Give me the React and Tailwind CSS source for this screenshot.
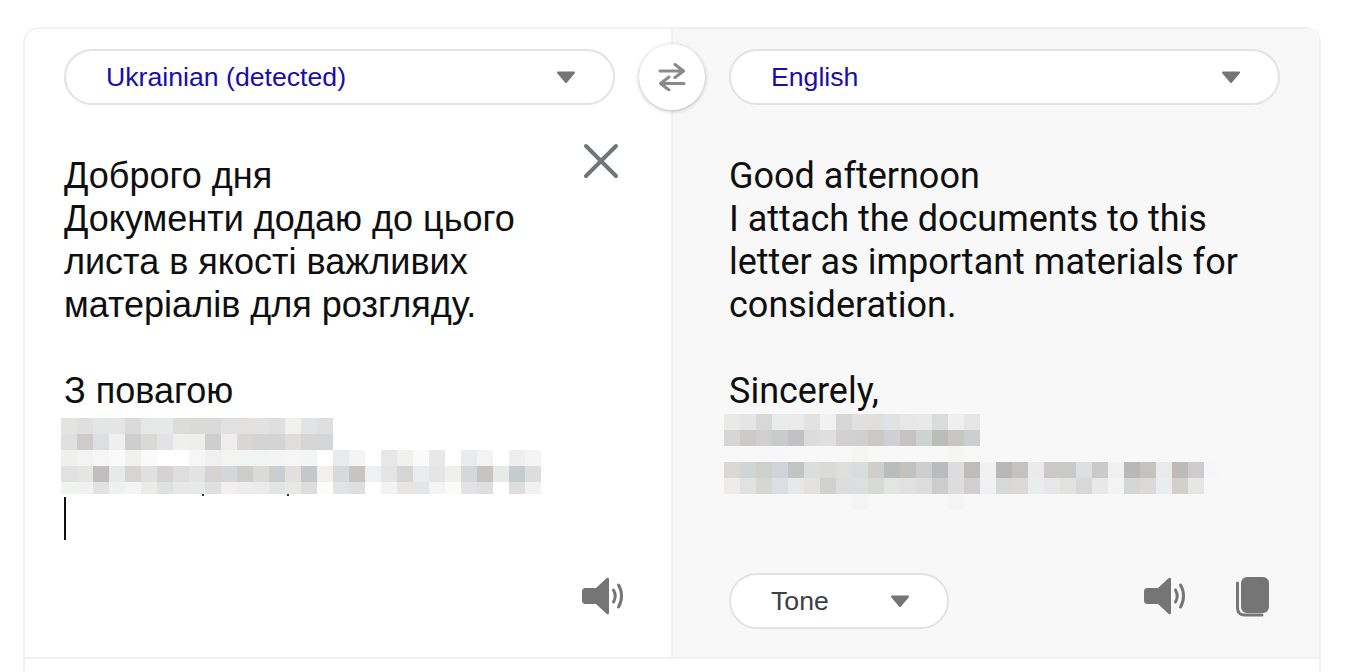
import React from 'react';

const leftRows = [
    ['e3e3e2', 'dfdfdf', 'e4e6e5', 'e4e5e4', 'dadada', 'e6e8e7', 'e7e8e8', 'dcdcda', 'dadad8', 'dadada', 'e1e1e1', 'e2e1e0', 'e2e2e2', 'dfdfdf', 'f0f0ee', 'e2e3e5', 'dfdfdf'],
    ['e0e0e0', 'cfcbcb', 'dcdee3', 'eeefee', 'cecece', 'd9d9d8', 'e3e3e5', 'efefee', 'eeeeec', 'cecece', 'efedee', 'd9d6d3', 'd4d4d4', 'd4d4d4', 'e0dddc', 'd6d6d7', 'd5d6d8'],
    ['efefee', 'f3f3f3', 'f7f6f7', 'fafafa', 'f1f1ef', 'fafafa', 'ffffff', 'ffffff', 'f6f6f6', 'f0f0f0', 'f3f4f2', 'f2f3f3', 'f2f4f3', 'f5f4f5', 'f6f6f6', 'f3f4f4', 'ffffff', 'e9eaec', 'f5f4f4', 'ffffff', 'e7e7e7', 'f1f1ef', 'fafafa', 'e8e8e8', 'ffffff', 'eaebed', 'f4f3f4', 'ffffff', 'eeeeee', 'f4f4f4'],
    ['e1e1e1', 'e5e5e3', 'c0bebf', 'e8eae9', 'd6d5d3', 'e0e0e0', 'd4d2d3', 'dedede', 'e3e3e3', 'd6d3d0', 'd4d6d9', 'cdcdcb', 'dcdad8', 'c9ced1', 'e2dfdc', 'c6c7cb', 'f1f0ed', 'd8d9db', 'c6c5c3', 'eef0f2', 'e5e5e5', 'd5d5d1', 'ebecf0', 'e5e5e5', 'efefec', 'd6d7d9', 'c6c5c3', 'e9eae8', 'c5cbce', 'dddddd'],
    ['f1f3f1', 'f1f1f1', 'e2e2e2', 'eff1f1', 'f4f4f4', 'ebebe9', 'dfe2e0', 'e8e8e8', 'e8eaea', 'e0e0e0', 'f1eff0', 'ededed', 'ebebeb', 'e2e5e4', 'e8e8e6', 'dddddd', 'fdfdfb', 'e2e3e5', 'dfdfdf', 'ffffff', 'f3f3f3', 'e7e6e4', 'e4e5e7', 'f4f4f4', 'fbfbf9', 'e3e3e6', 'dfdfdf', 'ffffff', 'dddddd', 'f1f1f1'],
];

const rightRows = [
    ['e9e9e7', 'e5e5e5', 'd9d8d8', 'e9ecea', 'e9eae9', 'e2e2e2', 'f1f1f1', 'd8d7d7', 'e0e0e0', 'e0dfdd', 'e1e2e5', 'e7e7e7', 'e9e9e9', 'd9dcda', 'efefef', 'e6e6e6'],
    ['d6d6d6', 'cdcac9', 'd1cfd0', 'c9ccca', 'c2c2c4', 'dcdcdc', 'dfdfdf', 'd2d0d1', 'd1d0d0', 'ccc8c5', 'cfd0d6', 'c6c3c0', 'cdd2d3', 'bdbdb7', 'c8c6c3', 'cdced0'],
    ['f8f8f8', 'f8f8f8', 'f7f7f7', 'f7f7f9', 'f8f8f8', 'f8f8f8', 'f8f8f8', 'f8f8f8', 'f5f5f2', 'f8f8f8', 'f8f8f8', 'f8f8f8', 'f8f8f8', 'f8f8f8', 'f5f5f2', 'f8f8f8'],
    ['dcd8d5', 'd0d5d5', 'cfd0ca', 'd2d4d9', 'c1c4c2', 'dbdedc', 'dadbd7', 'dedede', 'd9dcdc', 'cfcec8', 'babcbe', 'c5c2be', 'cdced0', 'b9bbbe', 'dddddd', 'bfbcbc', 'eff1f0', 'b8b8b8', 'c5c3c0', 'ebebeb', 'cac9c6', 'c9c9c9', 'dedfe1', 'cacaca', 'f0f0f0', 'b8b8b8', 'c5c2c0', 'e9eaec', 'bfbaba', 'cdcdd0', 'f7f7f9'],
    ['efebea', 'dfe2e1', 'd6d6d2', 'dddee3', 'e6e9e7', 'e3e2df', 'd1d1d1', 'dddddd', 'dcdfdf', 'd9d9d5', 'e3e5e3', 'e1e1e1', 'dddddd', 'cdcdcd', 'dddddd', 'd0cece', 'f1f1f3', 'd6d9d8', 'dbdad7', 'ebecee', 'e7e7e9', 'e2e3e0', 'd8d8d9', 'e8e8e8', 'f3f3f3', 'd4d7d6', 'dcdad8', 'ebecee', 'd2d0cd', 'e6e6e7'],
    ['f8f8f8', 'f8f8f8', 'f8f8f8', 'f8f8f8', 'f8f8f8', 'f8f8f8', 'f8f8f8', 'f8f8f8', 'f5f5f5', 'f8f8f8', 'f8f8f8', 'f8f8f8', 'f8f8f8', 'f8f8f8', 'f5f5f5', 'f8f8f8'],
];

const Caret = () => (
    <svg width="20" height="14" viewBox="0 0 20 14" className="shrink-0">
        <path d="M2 2.500h16L10 12z" fill="#757575" stroke="#757575" strokeWidth="2" strokeLinejoin="round" />
    </svg>
);

const Speaker = () => (
    <svg width="41" height="38" viewBox="0 0 41 38">
        <path d="M3 11h11L24.500 1.200c1-1 2.500-.5 2.500 1v33.600c0 1.500-1.500 2-2.500 1L14 27H3c-1.500 0-3-1.500-3-3V14c0-1.500 1.500-3 3-3z" fill="#757575" />
        <path d="M31.500 13c2 3.500 2 8.500 0 12" fill="none" stroke="#757575" strokeWidth="3" strokeLinecap="round" />
        <path d="M36.500 8c4 6.500 4 15.500 0 22" fill="none" stroke="#757575" strokeWidth="3" strokeLinecap="round" />
    </svg>
);

const CopyIcon = () => (
    <svg width="34" height="41" viewBox="0 0 34 41">
        <rect x="5" y="1" width="28" height="36" rx="6" fill="#757575" />
        <path d="M1.500 7v25c0 4.500 3 7 7 7H26" fill="none" stroke="#757575" strokeWidth="3" strokeLinecap="round" />
    </svg>
);

const Pill = ({ label, className, textClass = 'text-[#1a0dab]', arrowClass }) => (
    <div className={`flex h-[56px] items-center rounded-full border-2 border-[#e2e2e2] bg-white pl-[40px] font-['Liberation_Sans',sans-serif] text-[26.67px] ${textClass} ${className}`}>
        <span className="flex-1">{label}</span>
        <span className={arrowClass}><Caret /></span>
    </div>
);

const Mosaic = ({ rows, lastHeight }) => (
    <div className="flex flex-col">
        {rows.map((row, i) => (
            <div key={i} className="flex" style={{ height: i === rows.length - 1 ? lastHeight : 16 }}>
                {row.map((c, j) => (
                    <div key={j} className="h-full w-[16px]" style={{ backgroundColor: `#${c}` }} />
                ))}
            </div>
        ))}
    </div>
);

export default function App() {
    return (
        <div className="h-[672px] overflow-hidden bg-white pl-[23px] pt-[27px]">
            <div className="relative h-[660px] w-[1298px] rounded-t-2xl border-2 border-b-0 border-[#f1f1f1]">
                <div className="flex h-[630px] border-b-2 border-[#f1f1f1]">
                    <div className="relative flex w-[646px] flex-col pl-[39px] pt-[20px]">
                        <Pill label="Ukrainian (detected)" className="w-[551px]" arrowClass="mr-[37px]" />
                        <div className="mt-[49px] font-['Liberation_Sans',sans-serif] text-[36px] leading-[43px] text-[#0f0f0f]">
                            Доброго дня<br />
                            Документи додаю до цього<br />
                            листа в якості важливих<br />
                            матеріалів для розгляду.<br />
                            <br />
                            З повагою
                        </div>
                        <div className="-ml-[3px] mt-[6px]">
                            <Mosaic rows={leftRows} lastHeight={12} />
                        </div>
                        <div className="relative h-[2px]">
                            <span className="absolute left-[138px] top-0 h-[2px] w-[2px] bg-[#333]" />
                            <span className="absolute left-[223px] top-0 h-[2px] w-[2px] bg-[#333]" />
                        </div>
                        <div className="mt-[1px] h-[43px] w-[2px] bg-[#111]" />
                        <div className="mt-[37px] flex justify-end pr-[48px]">
                            <Speaker />
                        </div>
                        <svg width="38" height="38" viewBox="0 0 38 38" className="absolute left-[557px] top-[113px]">
                            <path d="M4 4l30 30M34 4L4 34" fill="none" stroke="#70757a" strokeWidth="4" strokeLinecap="round" />
                        </svg>
                    </div>
                    <div className="flex w-[648px] flex-col border-l-2 border-[#f1f1f1] bg-[#f8f8f8] pl-[56px] pt-[20px]">
                        <Pill label="English" className="w-[551px]" arrowClass="mr-[37px]" />
                        <div className="mt-[50px] font-['Roboto',sans-serif] text-[36px] leading-[43px] text-[#0f0f0f]">
                            Good afternoon<br />
                            I attach the documents to this<br />
                            letter as important materials for<br />
                            consideration.<br />
                            <br />
                            Sincerely,
                        </div>
                        <div className="-ml-[5px] mt-[1px]">
                            <Mosaic rows={rightRows} lastHeight={16} />
                        </div>
                        <div className="mt-[63px] flex items-start">
                            <Pill label="Tone" className="w-[220px]" textClass="text-[#3c4043]" arrowClass="mr-[37px]" />
                            <div className="ml-[195px] mt-[3px] flex items-start gap-[51px]">
                                <div className="mt-[1px]"><Speaker /></div>
                                <CopyIcon />
                            </div>
                        </div>
                    </div>
                </div>
                <div className="absolute left-[614px] top-[15px] flex h-[66px] w-[66px] items-center justify-center rounded-full bg-white shadow-[0_1px_4px_rgba(0,0,0,0.28)]">
                    <svg width="28" height="28" viewBox="0 0 28 28">
                        <path d="M2 8h23M17 1.500L25.500 8 17 14.500M26 20.500H3M11 14L2.500 20.500 11 27" fill="none" stroke="#8a8a8a" strokeWidth="3" strokeLinecap="round" strokeLinejoin="round" />
                    </svg>
                </div>
            </div>
        </div>
    );
}
